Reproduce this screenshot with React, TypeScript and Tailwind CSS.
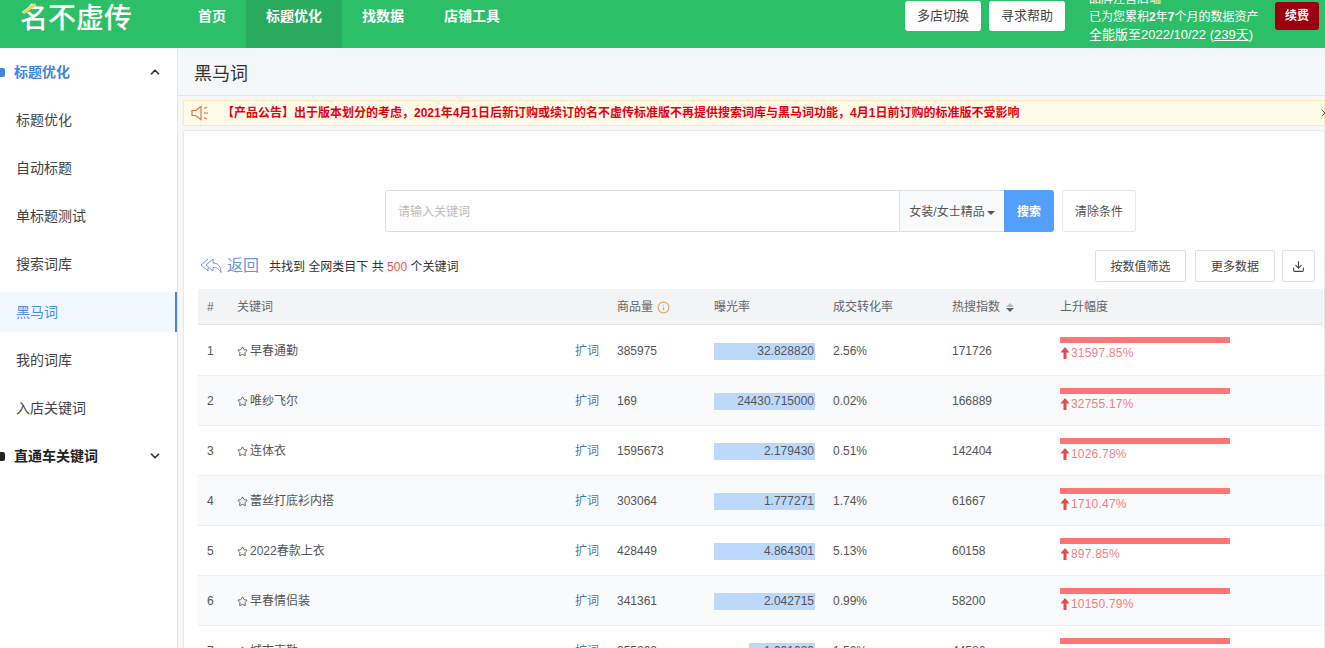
import { ChevronUp, ChevronDown, X, Star, Download, Info } from "lucide-react"

const FONT = "font-['Liberation_Sans','Noto_Sans_CJK_SC',sans-serif]"

const NAV = ["首页", "标题优化", "找数据", "店铺工具"]
const SIDE_ITEMS = ["标题优化", "自动标题", "单标题测试", "搜索词库", "黑马词", "我的词库", "入店关键词"]

const ROWS = [
  { kw: "早春通勤", goods: "385975", rate: "32.828820", bar: 101, conv: "2.56%", hot: "171726", rise: "31597.85%" },
  { kw: "唯纱飞尔", goods: "169", rate: "24430.715000", bar: 101, conv: "0.02%", hot: "166889", rise: "32755.17%" },
  { kw: "连体衣", goods: "1595673", rate: "2.179430", bar: 101, conv: "0.51%", hot: "142404", rise: "1026.78%" },
  { kw: "蕾丝打底衫内搭", goods: "303064", rate: "1.777271", bar: 101, conv: "1.74%", hot: "61667", rise: "1710.47%" },
  { kw: "2022春款上衣", goods: "428449", rate: "4.864301", bar: 101, conv: "5.13%", hot: "60158", rise: "897.85%" },
  { kw: "早春情侣装", goods: "341361", rate: "2.042715", bar: 101, conv: "0.99%", hot: "58200", rise: "10150.79%" },
  { kw: "城市克勒", goods: "355202", rate: "1.001020", bar: 66, conv: "1.50%", hot: "44586", rise: "" },
]

function Header() {
  return (
    <header className="flex h-12 shrink-0 items-center bg-[#2dbf68] text-white">
      <div className="relative ml-5 -mt-[10px] w-[158px] text-[28px] font-medium leading-none">
        名不虚传
        <span className="absolute left-[2px] top-[2px] h-[3px] w-[15px] -rotate-[35deg] bg-[#f0d050]" />
      </div>
      <nav className="flex h-full">
        {NAV.map((n, i) => (
          <div
            key={n}
            className={`flex h-full items-center px-5 pb-4 text-[14px] font-bold ${i === 1 ? "bg-[#29ab5e]" : ""}`}
          >
            {n}
          </div>
        ))}
      </nav>
      <div className="ml-auto flex h-full items-center">
        <button className="mb-4 mr-2 h-[30px] w-[76px] rounded-[3px] bg-white text-[13px] text-[#444]">多店切换</button>
        <button className="mb-4 h-[30px] w-[76px] rounded-[3px] bg-white text-[13px] text-[#444]">寻求帮助</button>
        <div className="ml-6 flex h-full w-[186px] flex-col justify-end overflow-hidden pb-[4px] leading-[18px]">
          <div className="text-[12px]">品牌注营后端</div>
          <div className="text-[12px]">已为您累积<b>2</b>年<b>7</b>个月的数据资产</div>
          <div className="text-[13px]">全能版至2022/10/22 (<span className="underline">239天</span>)</div>
        </div>
        <button className="mb-4 mr-[6px] h-[28px] w-[44px] rounded-[3px] bg-[#9b0011] text-[12px] font-bold">续费</button>
      </div>
    </header>
  )
}

function Sidebar() {
  return (
    <aside className="w-[178px] shrink-0 border-r border-[#e3e5e8] bg-white text-[14px] text-[#444]">
      <div className="flex h-12 items-center pr-[15px] font-bold text-[#3f86d8]">
        <span className="-ml-[3px] mr-[9px] h-[9px] w-2 rounded-[2px] bg-[#3f86d8]" />
        标题优化
        <ChevronUp className="ml-auto h-[14px] w-[14px] text-[#333]" strokeWidth={3} />
      </div>
      {SIDE_ITEMS.map((s) => (
        <div key={s} className="flex h-12 items-center">
          <div
            className={`flex h-10 w-full items-center pl-4 ${
              s === "黑马词" ? "border-r-2 border-[#4a86c5] bg-[#f1f8fe] text-[#4a90e2]" : ""
            }`}
          >
            {s}
          </div>
        </div>
      ))}
      <div className="flex h-12 items-center pr-[15px] font-bold text-[#222]">
        <span className="-ml-[3px] mr-[9px] h-[9px] w-2 rounded-[2px] bg-[#222]" />
        直通车关键词
        <ChevronDown className="ml-auto h-[14px] w-[14px] text-[#333]" strokeWidth={3} />
      </div>
    </aside>
  )
}

function Row({ row, index }: { row: (typeof ROWS)[number]; index: number }) {
  return (
    <div
      className={`grid grid-cols-[39px_338px_42px_97px_119px_119px_108px_1fr] items-center border-b border-[#eceef0] text-[12px] text-[#555] ${
        index === 0 ? "h-[51px] pt-[2px]" : "h-[50px] pt-[1px]"
      } ${index % 2 === 1 ? "bg-[#f9fafb]" : "bg-white"}`}
    >
      <div className="pl-[9px]">{index + 1}</div>
      <div className="flex items-center gap-[2px]">
        <Star className="h-[11px] w-[11px]" />
        {row.kw}
      </div>
      <div className="text-[#3f7fb5]">扩词</div>
      <div>{row.goods}</div>
      <div className="flex justify-end pr-[18px]">
        <div className="h-[17px] bg-[#bcd9fb] pr-[1px] text-right leading-[17px]" style={{ width: row.bar }}>
          {row.rate}
        </div>
      </div>
      <div>{row.conv}</div>
      <div>{row.hot}</div>
      <div className={`w-[170px] ${index === 0 ? "-mt-[4px]" : "-mt-[2px]"}`}>
        <div className="h-[6px] bg-[#fd7575]" />
        <div className="mt-[1px] flex h-[18px] items-center gap-[1px] tracking-[0.2px] text-[#f07f7f]">
          <svg viewBox="0 0 10 12" className="h-[12px] w-[10px] text-[#e54b4b]" fill="currentColor">
            <path d="M5 0 9.500 5.500H6.500V12H3.500V5.500H.5Z" />
          </svg>
          {row.rise}
        </div>
      </div>
    </div>
  )
}

export default function App() {
  return (
    <div className={`flex h-[648px] w-[1325px] flex-col overflow-hidden bg-[#f6f7f9] ${FONT}`}>
      <Header />
      <div className="flex min-h-0 flex-1">
        <Sidebar />
        <main className="min-w-0 flex-1 pl-[5px]">
          <div className="-ml-[5px] flex h-12 items-center border-b border-[#e3e5e8] pl-4 pt-[6px] text-[18px] text-[#333]">
            黑马词
          </div>
          <div className="mt-1 flex h-[26px] items-center border border-[#fbe9b8] bg-[#fffbe8] pl-[7px] text-[12px] font-bold text-[#e60012]">
            <svg viewBox="0 0 18 16" className="h-4 w-[18px] text-[#e8703a]" fill="none" stroke="currentColor" strokeWidth="1.2">
              <path d="M1 5.500h3.500L10 1.500v13l-5.500-4H1z" />
              <path d="M13 3.500l3-1.500M13 8h4M13 12.500l3 1.500" />
            </svg>
            <span className="ml-[13px]">
              【产品公告】出于版本划分的考虑，2021年4月1日后新订购或续订的名不虚传标准版不再提供搜索词库与黑马词功能，4月1日前订购的标准版不受影响
            </span>
            <X className="-mr-[7px] ml-auto h-[12px] w-[12px] shrink-0 text-[#555]" />
          </div>
          <div className="mt-[4px] h-[600px] rounded-[2px] border border-[#e6e7ea] bg-white pl-[14px]">
            <div className="ml-[187px] mt-[59px] flex h-[42px] w-[751px]">
              <div className="flex w-[515px] items-center rounded-l-[3px] border border-[#dcdee2] pl-3 pt-[1px] text-[12px] text-[#bbb]">
                请输入关键词
              </div>
              <div className="flex w-[104px] items-center justify-center gap-[2px] border-y border-[#dcdee2] bg-[#f9fafb] pt-[1px] text-[12px] text-[#555]">
                女装/女士精品
                <span className="mt-[2px] border-x-[4px] border-t-[4px] border-x-transparent border-t-[#555]" />
              </div>
              <div className="flex w-[50px] items-center justify-center rounded-r-[3px] bg-[#549ffb] pt-[1px] text-[12px] font-bold text-white">
                搜索
              </div>
              <div className="ml-2 flex w-[74px] items-center justify-center rounded-[2px] border border-[#e6e7ea] pt-[1px] text-[12px] text-[#555]">
                清除条件
              </div>
            </div>
            <div className="mt-[18px] flex h-8 items-center pl-[2px] pr-[9px]">
              <svg viewBox="0 0 22 18" className="h-[18px] w-[22px] text-[#6f94d8]" fill="none" stroke="currentColor" strokeWidth="1">
                <path d="M8 2 1 8l7 6v-3.500" />
                <path d="M13 2 6 8l7 6v-3.500c3.500 0 6 1 8 5 0-6-3-9.500-8-9.500z" />
              </svg>
              <span className="ml-[5px] text-[16px] text-[#6f94d8]">返回</span>
              <span className="ml-[10px] pt-[1px] text-[12px] text-[#333]">
                共找到 全网类目下 共 <span className="text-[#f05050]">500</span> 个关键词
              </span>
              <button className="ml-auto h-8 w-[91px] rounded-[2px] border border-[#dddfe2] pt-[1px] text-[12px] text-[#444]">按数值筛选</button>
              <button className="ml-[9px] h-8 w-[80px] rounded-[2px] border border-[#dddfe2] pt-[1px] text-[12px] text-[#444]">更多数据</button>
              <button className="ml-[7px] flex h-8 w-[33px] items-center justify-center rounded-[2px] border border-[#dddfe2] text-[#444]">
                <Download className="h-[13px] w-[13px]" />
              </button>
            </div>
            <div className="mt-[7px] w-[1125px]">
              <div className="grid h-9 grid-cols-[39px_380px_97px_119px_119px_108px_1fr] items-center border-b border-[#e0e2e5] bg-[#f3f4f5] pt-[1px] text-[12px] text-[#666]">
                <div className="pl-[9px]">#</div>
                <div>关键词</div>
                <div className="flex items-center gap-[4px]">
                  商品量
                  <Info className="h-[13px] w-[13px] text-[#f0a050]" />
                </div>
                <div>曝光率</div>
                <div>成交转化率</div>
                <div className="flex items-center gap-[6px]">
                  热搜指数
                  <span className="flex flex-col gap-[1px]">
                    <span className="border-x-[4px] border-b-[4px] border-x-transparent border-b-[#bbb]" />
                    <span className="border-x-[4px] border-t-[4px] border-x-transparent border-t-[#666]" />
                  </span>
                </div>
                <div>上升幅度</div>
              </div>
              {ROWS.map((r, i) => (
                <Row key={i} row={r} index={i} />
              ))}
            </div>
          </div>
        </main>
      </div>
    </div>
  )
}
